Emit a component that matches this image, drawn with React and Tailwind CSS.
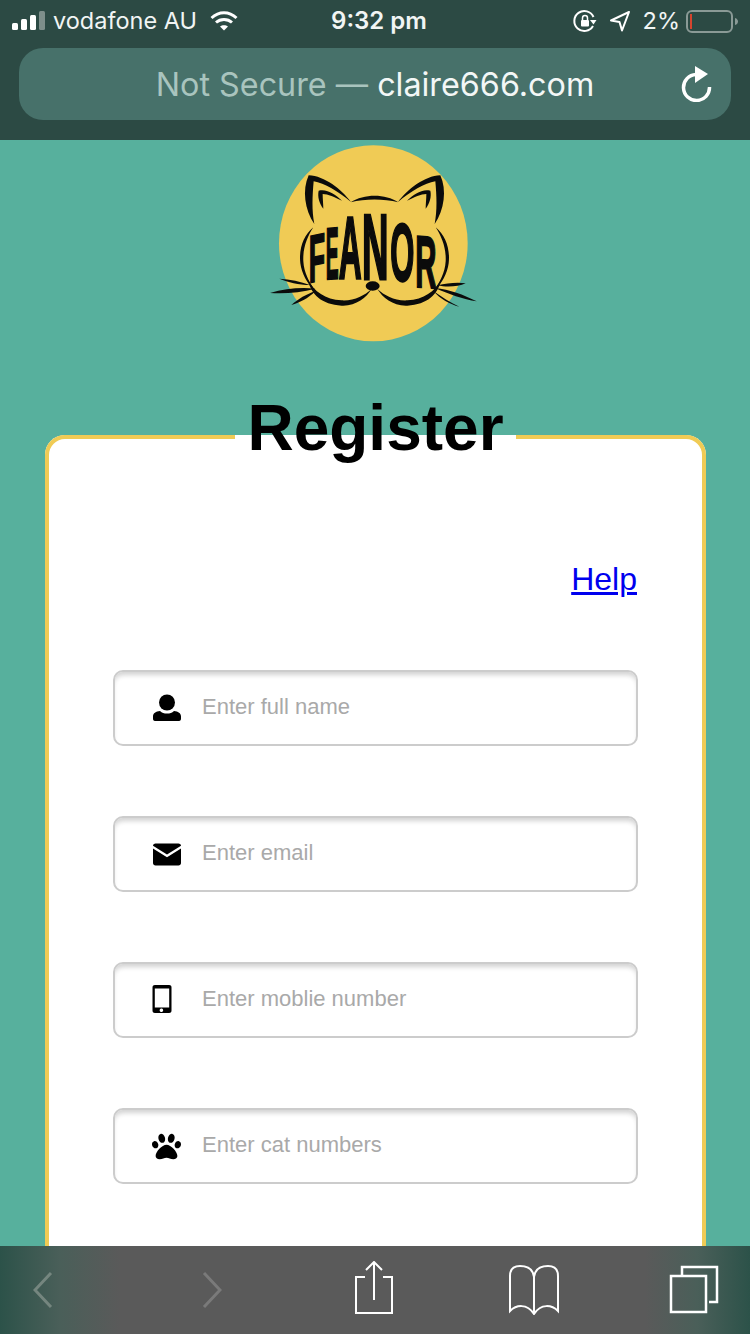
// App.jsx
import React from 'react';
import { FaPaw } from 'react-icons/fa';

const UserIcon = () => (
  <svg width="30" height="30" viewBox="0 0 30 30" fill="#000" className="-mt-[3px]">
    <circle cx="15" cy="10.500" r="8" />
    <path d="M3 29c-1.500 0-2-1-2-2.500v-2C1 21 4 19.500 8 19c2 2 4 2.500 7 2.500s5-.5 7-2.500c4 .5 7 2 7 5.500v2c0 1.500-.5 2.500-2 2.500z" />
  </svg>
);

const MailIcon = () => (
  <svg width="30" height="30" viewBox="0 0 30 30" fill="#000">
    <path d="M3.500 4.500h23c1.300 0 2.500 1 2.500 2.200L15 15.500 1 6.700c0-1.200 1.200-2.200 2.500-2.200z" />
    <path d="M1 9.500l14 8.800 14-8.800v14.500c0 1.400-1.100 2.500-2.500 2.500h-23C2.100 26.500 1 25.400 1 24z" />
  </svg>
);

const PhoneIcon = () => (
  <svg width="20" height="30" viewBox="5 0 20 30" fill="#000" className="-mt-[2px]">
    <path
      fillRule="evenodd"
      d="M8 1h14c2 0 2.500 1 2.500 2.500v23c0 1.500-.5 2.500-2.500 2.500H8c-2 0-2.500-1-2.500-2.500v-23C5.500 2 6 1 8 1zm-.200 3.500v19h14.400v-19zM15 24.500a1.800 1.800 0 100 3.400 1.800 1.800 0 000-3.400z"
    />
  </svg>
);

const letters = [
  { c: 'F', x: 146, y: 428, sx: 0.8, sy: 2.0, skew: -12 },
  { c: 'E', x: 197, y: 418, sx: 0.58, sy: 2.2, skew: -4 },
  { c: 'A', x: 236, y: 416, sx: 0.95, sy: 2.65, skew: 0 },
  { c: 'N', x: 306, y: 416, sx: 1.1, sy: 2.8, skew: 0 },
  { c: 'O', x: 391, y: 421, sx: 0.93, sy: 2.45, skew: 2 },
  { c: 'R', x: 466, y: 440, sx: 0.88, sy: 2.2, skew: 4 },
];

const CatHalf = () => (
  <g fill="#0b0b0b">
    <path d="M163 252C134 210 126 150 146 106c48 2 98 42 127 80-38-32-80-56-112-62-4 44-6 88 2 128z" />
    <path d="M176 152c26-6 50 12 70 30-22-10-42-20-58-20 0 16 2 30 2 44-12-16-18-36-14-54z" />
    <path d="M160 262c-30 24-44 66-39 108 4 30 20 62 46 84-20-28-35-56-37-90-2-40 12-74 30-102z" />
    <path d="M143 418c10 46 42 76 102 79 42 2 74-24 90-50-22 20-52 36-90 34-50-2-82-26-102-63z" />
  </g>
);

const CatLogo = () => (
  <svg width="230" height="210" viewBox="0 0 690 630" className="shrink-0">
    <ellipse cx="340" cy="310" rx="283" ry="294" fill="#f0cb55" />
    <CatHalf />
    <g transform="translate(687 0) scale(-1 1)">
      <CatHalf />
    </g>
    {/* whiskers are not symmetric */}
    <g fill="#0b0b0b">
      <path d="M58 416c32 1 64 9 92 19-34 0-66-8-92-19z" />
      <path d="M30 459c44-13 92-18 136-13-44 12-92 16-136 13z" />
      <path d="M94 495c20-18 46-33 72-41-20 20-46 34-72 41z" />
      <path d="M650 484c-40-20-80-35-125-40 40 18 85 34 125 40z" />
      <path d="M617 430c-27-4-57 0-84 6 27 7 62 4 84-6z" />
      <path d="M598 500c-28-12-53-30-78-47 20 24 50 40 78 47z" />
    </g>
    <path d="M272 187c40-26 104-26 143 0-44-11-100-11-143 0z" fill="#0b0b0b" />
    <ellipse cx="338" cy="438" rx="21" ry="14" fill="#0b0b0b" />
    {letters.map((l) => (
      <text
        key={l.c}
        transform={`translate(${l.x} ${l.y}) skewY(${l.skew}) scale(${l.sx} ${l.sy})`}
        fontSize="100"
        fontWeight="700"
        fontFamily="'Liberation Sans', sans-serif"
        fill="#0b0b0b"
        stroke="#0b0b0b"
        strokeWidth="3"
      >
        {l.c}
      </text>
    ))}
  </svg>
);

const fields = [
  { placeholder: 'Enter full name', icon: <UserIcon /> },
  { placeholder: 'Enter email', icon: <MailIcon /> },
  { placeholder: 'Enter moblie number', icon: <PhoneIcon /> },
  { placeholder: 'Enter cat numbers', icon: <FaPaw size={29} color="#000" /> },
];

const Field = ({ placeholder, icon }) => (
  <div className="flex h-[76px] shrink-0 items-center rounded-[10px] border-2 border-[#cccccc] bg-white pl-[37px] shadow-[inset_0_5px_5px_-2px_rgba(0,0,0,0.18)]">
    <div className="flex w-[30px] shrink-0 items-center justify-start">{icon}</div>
    <input
      type="text"
      placeholder={placeholder}
      className="mb-[4px] ml-[20px] min-w-0 flex-1 bg-transparent text-[22px] outline-none placeholder:text-[#a9a9a9]"
    />
  </div>
);

const StatusBar = () => (
  <div className="flex h-[42px] items-center pl-3 pr-[11px] text-[23.5px] text-[#f1f5f4]">
    <div className="flex flex-1 items-center">
      <svg width="36" height="20" viewBox="0 0 36 20" className="shrink-0">
        <rect x="0" y="12" width="6" height="7" rx="1.500" fill="#fff" />
        <rect x="9" y="8" width="6" height="11" rx="1.500" fill="#fff" />
        <rect x="18" y="4" width="6" height="15" rx="1.500" fill="#fff" />
        <rect x="27" y="0" width="6" height="19" rx="1.500" fill="#7d8e8a" />
      </svg>
      <span className="ml-[5px]">vodafone AU</span>
      <svg width="28" height="20" viewBox="0 0 28 20" className="ml-[13px] shrink-0" fill="none" stroke="#fff" strokeWidth="3">
        <path d="M1.500 7C9 0 19 0 26.500 7" />
        <path d="M6 11.500c4.500-4 11.500-4 16 0" />
        <path d="M14 19.500l-4-4c2.300-1.800 5.700-1.800 8 0z" fill="#fff" stroke="none" />
      </svg>
    </div>
    <span className="ml-[7px] text-[24px] font-semibold">9:32 pm</span>
    <div className="flex flex-1 items-center justify-end">
      <svg width="24" height="24" viewBox="0 0 24 24" className="shrink-0" fill="none" stroke="#fff" strokeWidth="2">
        <path d="M20 17a10 10 0 11.500-9" />
        <path d="M23.500 11l-6.500 0 3.500 4.500z" fill="#fff" stroke="none" />
        <rect x="8" y="11" width="8" height="6.500" rx="1" fill="#fff" stroke="none" />
        <path d="M9.500 11V9a2.500 2.500 0 015 0v2" strokeWidth="1.500" />
      </svg>
      <svg width="22" height="22" viewBox="0 0 22 22" className="ml-[12px] shrink-0" fill="none" stroke="#fff" strokeWidth="2" strokeLinejoin="round">
        <path d="M20 2L2 10.500l8.500 1.500L13 20.500z" />
      </svg>
      <span className="ml-[12px]">2%</span>
      <svg width="53" height="23" viewBox="0 0 53 23" className="ml-[6px] shrink-0" fill="none">
        <rect x="1" y="1" width="45" height="21" rx="5" stroke="#8a9a96" strokeWidth="2" />
        <rect x="4" y="4" width="2" height="15" fill="#d6452f" />
        <path d="M49 8c2 .5 3 2 3 3.500S51 14.500 49 15z" fill="#8a9a96" />
      </svg>
    </div>
  </div>
);

const BottomBar = () => (
  <div className="flex h-[88px] shrink-0 items-center bg-[linear-gradient(to_right,#2c5249_0%,#4a5f59_8%,#5a5a5a_16%,#5a5a5a_86%,#4a5f59_93%,#2c5249_100%)] pl-[33px]">
    <svg width="20" height="38" viewBox="0 0 20 38" className="shrink-0" fill="none" stroke="#75867f" strokeWidth="3">
      <path d="M18 2L2 19l16 17" />
    </svg>
    <svg width="20" height="38" viewBox="0 0 20 38" className="ml-[149px] shrink-0" fill="none" stroke="#7a7a7a" strokeWidth="3">
      <path d="M2 2l16 17L2 36" />
    </svg>
    <svg width="40" height="54" viewBox="0 0 40 54" className="ml-[132px] mb-[4px] shrink-0" fill="none" stroke="#fff" strokeWidth="2">
      <path d="M11 16H2v36h36V16h-9" />
      <path d="M20 1v38M12 9l8-8 8 8" />
    </svg>
    <svg width="52" height="50" viewBox="0 0 52 50" className="ml-[114px] shrink-0" fill="none" stroke="#fff" strokeWidth="2">
      <path d="M26 12C25 4 19 1 12 1 5 1 2 5 2 11v35c6-6 17-8 24 3 7-11 18-9 24-3V11c0-6-3-10-10-10-7 0-13 3-14 11zM26 12v37" />
    </svg>
    <svg width="50" height="50" viewBox="0 0 50 50" className="ml-[109px] shrink-0" fill="none" stroke="#fff" strokeWidth="2.500">
      <path d="M13 10V2h35v35h-8" />
      <path d="M2 11h35v36H2z" />
    </svg>
  </div>
);

const App = () => {
  return (
    <div className="flex h-[1334px] w-[750px] flex-col overflow-hidden bg-[#57b09d] font-['Liberation_Sans',sans-serif]">
      {/* Safari top chrome */}
      <div className="h-[140px] shrink-0 bg-[#2c4a44] font-['Inter',sans-serif]">
        <StatusBar />
        <div className="mx-[19px] mt-[6px] grid h-[72px] grid-cols-[1fr_auto_1fr] items-center rounded-[24px] bg-[#47716a] text-[32.3px]">
          <span />
          <div className="whitespace-nowrap pt-[3px]">
            <span className="text-[#a9c4be]">Not Secure — </span>
            <span className="text-[#f3f7f6]">claire666.com</span>
          </div>
          <div className="flex justify-end pr-[18px]">
            <svg width="32" height="36" viewBox="0 0 32 36" fill="none" stroke="#fff" strokeWidth="3.500">
              <path d="M15 8.500A13 13 0 1028.500 21" />
              <path d="M14 0l13 8-13 9z" fill="#fff" stroke="none" />
            </svg>
          </div>
        </div>
      </div>

      {/* Page */}
      <div className="min-h-0 flex-1 overflow-hidden">
        <div className="flex justify-center">
          <CatLogo />
        </div>
        <fieldset className="ml-[45px] mr-[44px] mt-[41px] rounded-[20px] border-4 border-[#f0cb55] bg-white px-16">
          <legend className="mx-auto px-3 pb-[18px] text-[64px] leading-[74px] font-bold text-black">Register</legend>
          <div className="mt-[78px] flex justify-end pr-px">
            <a href="#help" className="text-[32px] leading-[37px] text-[#0000ee] underline">Help</a>
          </div>
          <div className="mt-[72px] flex flex-col gap-[70px] pb-[200px]">
            {fields.map((field) => (
              <Field key={field.placeholder} {...field} />
            ))}
          </div>
        </fieldset>
      </div>

      <BottomBar />
    </div>
  );
};

export default App;
